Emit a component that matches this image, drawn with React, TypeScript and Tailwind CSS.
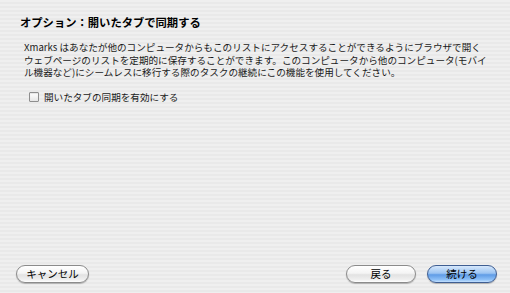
import React from "react";

const font = { fontFamily: '"Noto Sans CJK JP", "Noto Sans", sans-serif' };

function AquaButton({
  label,
  primary,
  width,
}: {
  label: string;
  primary?: boolean;
  width: string;
}) {
  const base =
    "flex h-[18px] items-center justify-center rounded-full border text-[10.5px] leading-none text-black shadow-[0_1px_1px_rgba(0,0,0,0.25)]";
  const skin = primary
    ? "border-[#3f5e92] bg-[linear-gradient(to_bottom,#d6e8fc_0%,#9cc4f2_45%,#5f9ce6_55%,#8dc0f7_85%,#c4e0fd_100%)]"
    : "border-[#8b8b8b] bg-[linear-gradient(to_bottom,#ffffff_0%,#f4f4f4_45%,#e2e2e2_55%,#efefef_85%,#ffffff_100%)]";
  return (
    <button className={`${base} ${skin} ${width}`} style={font}>
      {label}
    </button>
  );
}

export default function App() {
  return (
    <div
      className="flex h-[293px] w-[510px] flex-col bg-[repeating-linear-gradient(to_bottom,#efefef_0px,#efefef_2px,#e9e9e9_2px,#e9e9e9_4px)] text-[#1a1a1a]"
      style={font}
    >
      <h1 className="pl-[20px] pt-[14px] text-[11.3px] font-bold leading-[16px] text-black">
        オプション：開いたタブで同期する
      </h1>

      <p className="mt-[11px] whitespace-nowrap pl-[24px] text-[9.6px] leading-[12.5px]">
        Xmarks はあなたが他のコンピュータからもこのリストにアクセスすることができるようにブラウザで開く
        <br />
        ウェブページのリストを定期的に保存することができます。このコンピュータから他のコンピュータ(モバイ
        <br />
        ル機器など)にシームレスに移行する際のタスクの継続にこの機能を使用してください。
      </p>

      <label className="mt-[12px] flex items-center gap-[5px] pl-[29px] text-[9.6px] leading-[12px]">
        <span className="h-[10px] w-[10px] rounded-[1px] border border-[#8e8e8e] bg-[linear-gradient(to_bottom,#ffffff,#e6e6e6)] shadow-[inset_0_1px_1px_rgba(0,0,0,0.1)]" />
        開いたタブの同期を有効にする
      </label>

      <div className="flex-1" />

      <div className="flex items-center justify-between pb-[10px] pl-[16px] pr-[13px]">
        <AquaButton label="キャンセル" width="w-[73px]" />
        <div className="flex gap-[11px]">
          <AquaButton label="戻る" width="w-[70px]" />
          <AquaButton label="続ける" width="w-[70px]" primary />
        </div>
      </div>
    </div>
  );
}
